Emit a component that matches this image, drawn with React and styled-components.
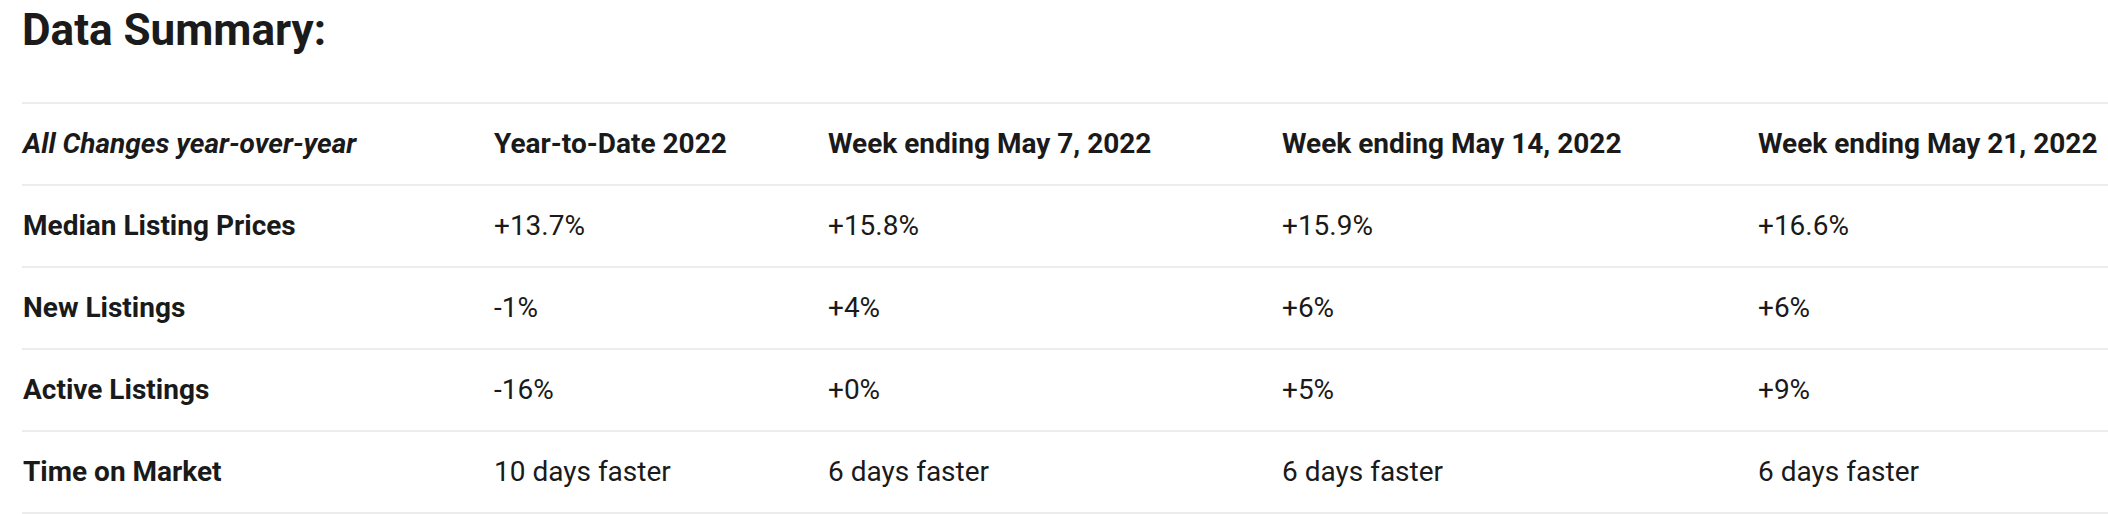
import React from "react";
import styled, { createGlobalStyle } from "styled-components";

const GlobalStyle = createGlobalStyle`
  body {
    margin: 0;
    background: #ffffff;
    font-family: Roboto, "Liberation Sans", Arial, sans-serif;
    color: #1a1a1a;
    overflow: hidden;
  }
`;

const Page = styled.div`
  padding: 0 0 0 22px;
`;

const Title = styled.h2`
  font-size: 44px;
  line-height: 52px;
  font-weight: 700;
  margin: 4px 0 46px 0;
  color: #1b1b1b;
`;

const Table = styled.div`
  border-top: 2px solid #ececec;
  width: max-content;
`;

const Row = styled.div`
  display: grid;
  grid-template-columns: 471px 334px 454px 476px 480px;
  align-items: center;
  height: 80px;
  border-bottom: 2px solid #ececec;
`;

const Cell = styled.div`
  font-size: 28px;
  line-height: 34px;
  font-weight: ${(p) => (p.bold ? 700 : 400)};
  font-style: ${(p) => (p.italic ? "italic" : "normal")};
  color: #1a1a1a;
  white-space: nowrap;
  padding-left: 1px;
`;

const headers = [
  "Year-to-Date 2022",
  "Week ending May 7, 2022",
  "Week ending May 14, 2022",
  "Week ending May 21, 2022",
];

const rows = [
  ["Median Listing Prices", "+13.7%", "+15.8%", "+15.9%", "+16.6%"],
  ["New Listings", "-1%", "+4%", "+6%", "+6%"],
  ["Active Listings", "-16%", "+0%", "+5%", "+9%"],
  ["Time on Market", "10 days faster", "6 days faster", "6 days faster", "6 days faster"],
];

const App = () => {
  return (
    <Page>
      <GlobalStyle />
      <Title>Data Summary:</Title>
      <Table>
        <Row>
          <Cell bold italic>
            All Changes year-over-year
          </Cell>
          {headers.map((h) => (
            <Cell bold key={h}>
              {h}
            </Cell>
          ))}
        </Row>
        {rows.map((r) => (
          <Row key={r[0]}>
            {r.map((c, i) => (
              <Cell bold={i === 0} key={i}>
                {c}
              </Cell>
            ))}
          </Row>
        ))}
      </Table>
    </Page>
  );
};

export default App;
